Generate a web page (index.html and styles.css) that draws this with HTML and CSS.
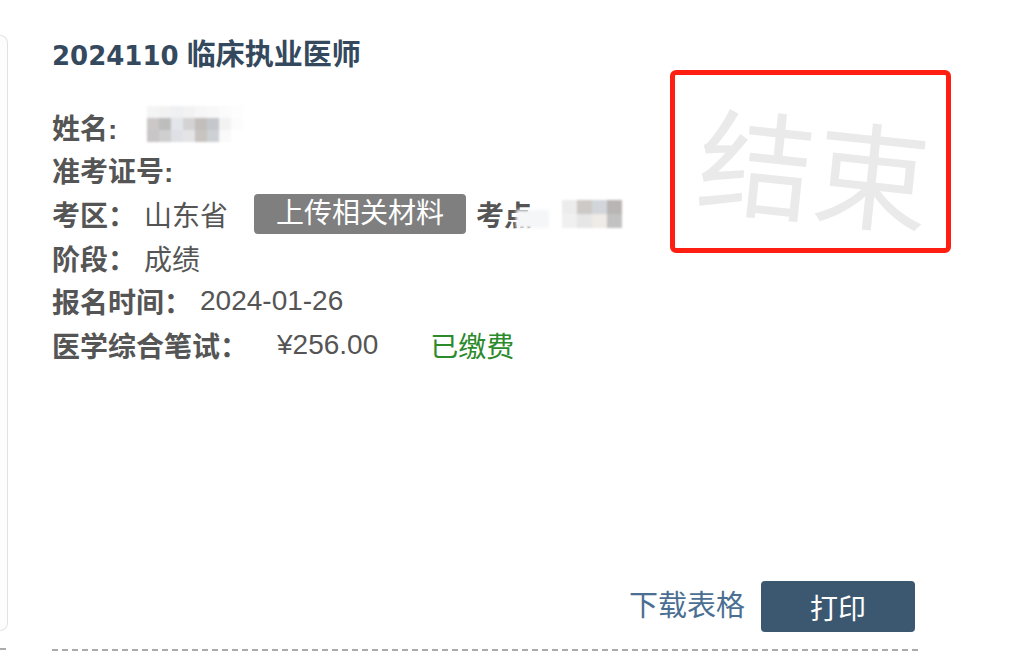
FILE: index.html
```html
<!DOCTYPE html>
<html lang="zh-CN">
<head>
    <meta charset="UTF-8">
    <meta name="viewport" content="width=device-width, initial-scale=1.0">
    <title>报名信息</title>
    <link rel="stylesheet" href="styles.css">
</head>
<body>
    <div class="page">
        <!-- 左侧上一张卡片（只露出一点） -->
        <div class="side">
            <div class="side-panel"></div>
            <div class="dash-line side-dash"></div>
        </div>

        <div class="card">
            <h2 class="card-title"><span class="exam-code">2024110</span> 临床执业医师</h2>

            <div class="info">
                <div class="row">
                    <span class="label">姓名:</span>
                    <span class="mosaic mosaic-name">
                        <i style="background:#f4f4f4"></i><i style="background:#f2f2f2"></i><i style="background:#eef0f2"></i><i style="background:#f2f2f2"></i><i style="background:#f6f6f6"></i><i style="background:#f8f8f8"></i><i style="background:#fbfbfb"></i><i style="background:#fdfdfd"></i>
                        <i style="background:#ccc8c8"></i><i style="background:#bdbdbd"></i><i style="background:#e2e6ea"></i><i style="background:#d4d2d2"></i><i style="background:#c2bebc"></i><i style="background:#c4c8cc"></i><i style="background:#f2f2f2"></i><i style="background:#fcfcfc"></i>
                        <i style="background:#c8c6c6"></i><i style="background:#cfcfcf"></i><i style="background:#dde1e6"></i><i style="background:#e4e4e6"></i><i style="background:#c8c4c0"></i><i style="background:#cdd0d4"></i><i style="background:#fafafa"></i><i style="background:#ffffff"></i>
                    </span>
                </div>
                <div class="row">
                    <span class="label">准考证号:</span>
                </div>
                <div class="row">
                    <span class="label">考区：</span>
                    <span class="value">山东省</span>
                    <span class="upload-btn">上传相关材料</span>
                    <span class="label site-label">考点</span>
                    <span class="mosaic-site">
                        <span class="fade"></span>
                        <span class="mosaic site-tiles">
                            <i style="background:#ececec"></i><i style="background:#cdc9c6"></i><i style="background:#d2d6da"></i><i style="background:#b9b5b4"></i>
                            <i style="background:#f0f0f0"></i><i style="background:#e6e6e6"></i><i style="background:#efebe6"></i><i style="background:#c2c2c2"></i>
                        </span>
                    </span>
                </div>
                <div class="row">
                    <span class="label">阶段：</span>
                    <span class="value">成绩</span>
                </div>
                <div class="row">
                    <span class="label">报名时间：</span>
                    <span class="value">2024-01-26</span>
                </div>
                <div class="row">
                    <span class="label">医学综合笔试：</span>
                    <span class="value fee">¥256.00</span>
                    <span class="paid">已缴费</span>
                </div>
            </div>

            <div class="stamp">
                <span class="stamp-text">结束</span>
            </div>

            <div class="actions">
                <a href="#" class="download-link">下载表格</a>
                <button type="button" class="print-btn">打印</button>
            </div>

            <div class="dash-line"></div>
        </div>
    </div>
</body>
</html>
```

FILE: styles.css
```css
body {
    margin: 0;
    font-family: "Liberation Sans", "Noto Sans CJK SC", sans-serif;
    font-size: 28px;
    color: #555;
    background-color: #fff;
}
.page {
    display: flex;
    gap: 44px;
    height: 651px;
    overflow: hidden;
}
.side {
    width: 8px;
    padding-top: 35px;
    flex-shrink: 0;
}
.side-panel {
    height: 594px;
    border: 1px solid #e2e2e2;
    border-left: none;
    border-radius: 0 9px 9px 0;
    background-color: #fdfdfd;
}
.side-dash {
    margin-top: 17px;
    width: 6px;
}
.dash-line {
    height: 2px;
    background-image: repeating-linear-gradient(90deg, #ababab 0 6px, transparent 6px 10px);
}
.card {
    position: relative;
    width: 868px;
    padding-top: 35px;
    display: flex;
    flex-direction: column;
}
.card-title {
    margin: 0;
    font-size: 29px;
    line-height: 40px;
    font-weight: bold;
    color: #34495e;
}
.exam-code {
    font-family: "DejaVu Sans", sans-serif;
    font-size: 26px;
}
.info {
    margin-top: 29px;
}
.row {
    display: flex;
    align-items: center;
    height: 43.6px;
    white-space: nowrap;
}
.label {
    font-weight: bold;
    color: #555;
}
.value {
    margin-left: 8px;
}
.fee {
    margin-left: 29px;
}
.paid {
    margin-left: 52px;
    color: #2b8a2b;
}
.upload-btn {
    margin-left: 26px;
    padding: 0 22px;
    height: 40px;
    line-height: 40px;
    background-color: #7f7f7f;
    color: #fff;
    border-radius: 4px;
}
.site-label {
    margin-left: 10px;
}
.mosaic {
    display: grid;
    filter: blur(1px);
}
.mosaic i {
    display: block;
}
.mosaic-name {
    margin-left: 30px;
    grid-template-columns: repeat(8, 12px);
    grid-template-rows: repeat(3, 12px);
    margin-top: -6px;
}
.mosaic-site {
    display: flex;
    align-items: center;
    margin-left: -16px;
}
.mosaic-site .fade {
    width: 33px;
    height: 18px;
    margin-top: 10px;
    background-color: #f4f6f8;
    filter: blur(1.5px);
}
.site-tiles {
    margin-left: 13px;
    grid-template-columns: repeat(4, 15px);
    grid-template-rows: repeat(2, 14px);
}
.stamp {
    position: absolute;
    left: 618px;
    top: 70px;
    width: 271px;
    height: 173px;
    border: 5px solid #ff1f12;
    border-radius: 6px;
    display: flex;
    align-items: center;
    justify-content: center;
}
.stamp-text {
    font-family: "Noto Sans CJK SC", sans-serif;
    font-size: 116px;
    line-height: 1;
    color: #eaeaea;
    transform: rotate(6deg);
    margin-left: 8px;
    margin-top: 4px;
}
.actions {
    margin-top: auto;
    display: flex;
    justify-content: flex-end;
    align-items: center;
    gap: 16px;
    padding-right: 5px;
    margin-bottom: 17px;
}
.download-link {
    color: #4b6f93;
    text-decoration: none;
    font-size: 29px;
    margin-top: -8px;
}
.print-btn {
    width: 154px;
    height: 51px;
    border: none;
    border-radius: 4px;
    background-color: #3b5870;
    color: #fff;
    font-family: inherit;
    font-size: 28px;
    cursor: pointer;
}
```
